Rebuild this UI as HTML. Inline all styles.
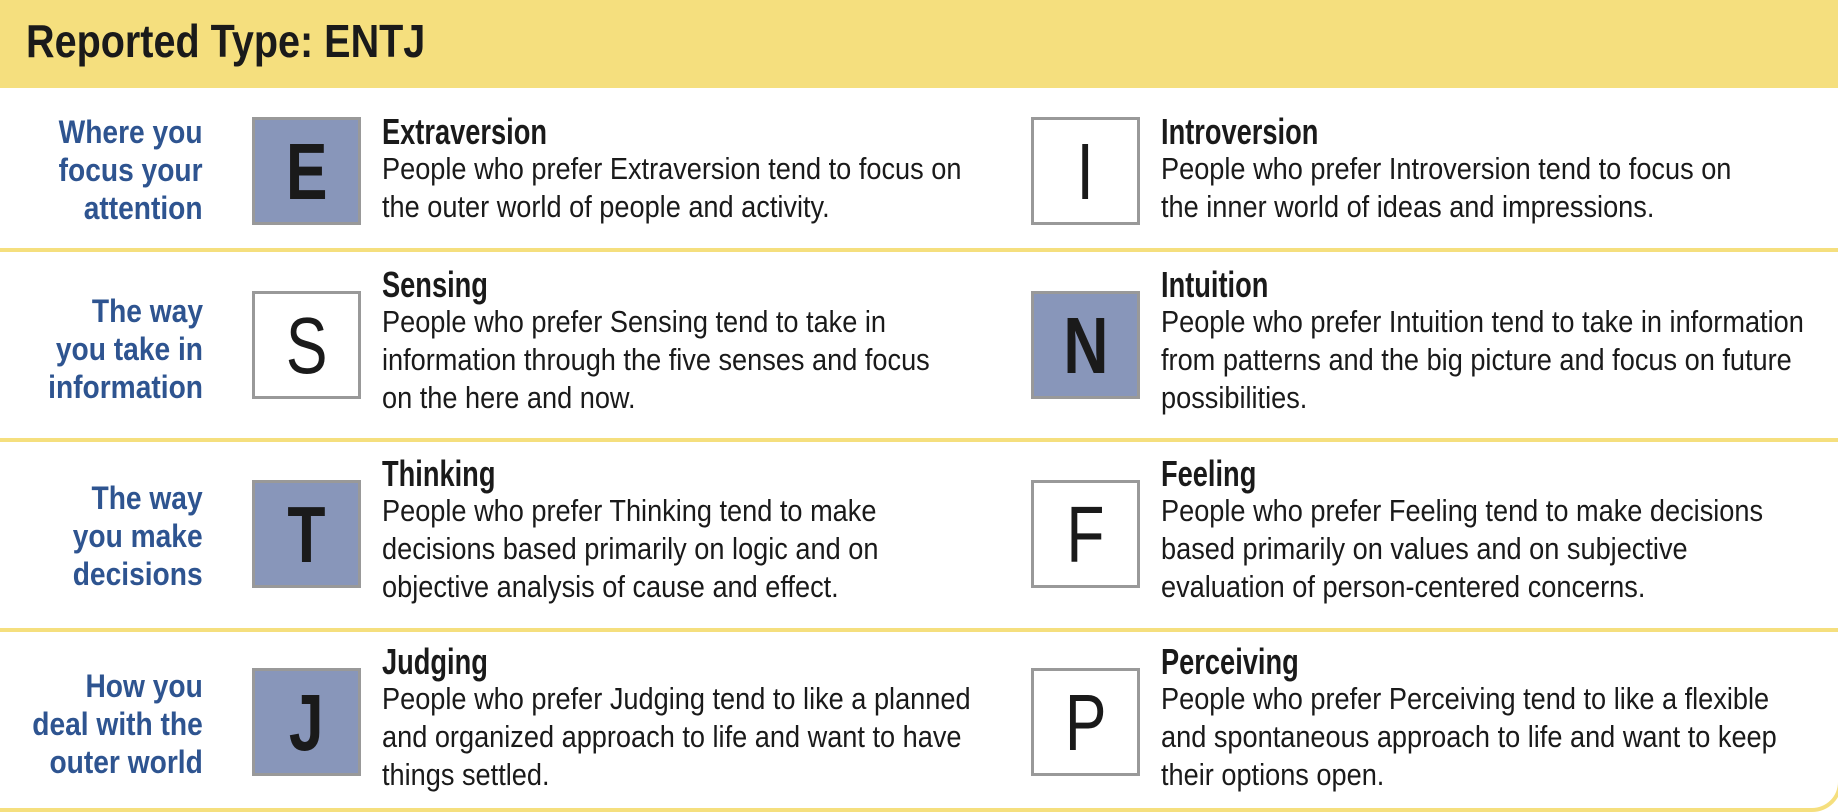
<!DOCTYPE html>
<html><head><style>
*{margin:0;padding:0;box-sizing:border-box}
body{width:1838px;height:808px;background:#fff;position:relative;overflow:hidden;font-family:"Liberation Sans",sans-serif;color:#1a1a1a}
.hdr{position:absolute;left:0;top:0;width:1838px;height:88px;background:#f5df7e}
.hdr h1{position:absolute;left:26px;top:14px;font-size:46px;font-weight:bold;transform:scaleX(0.86);transform-origin:left;white-space:nowrap}
.frame{position:absolute;left:-10px;top:88px;width:1852px;height:724px;border:4px solid #f5df7e;border-top:none;border-radius:0 0 30px 0}
.sep{position:absolute;left:0;width:1838px;height:4px;background:#f5df7e}
.lab{position:absolute;right:1635px;text-align:right;color:#2e5490;font-weight:bold;font-size:32px;line-height:38px;transform:scaleX(0.88);transform-origin:right;white-space:nowrap}
.box{position:absolute;width:109px;height:108px;border:3px solid #999;font-size:80px;line-height:104px;text-align:center;background:#fff}
.box span{display:inline-block;transform:scaleX(0.78)}
.on{background:#8896ba;font-weight:bold}
.t{position:absolute;font-size:30.5px;line-height:38px;white-space:nowrap;transform:scaleX(0.89);transform-origin:left}
.t b{display:block;font-size:36px;line-height:40px;margin-bottom:-2px;transform:scaleX(0.85);transform-origin:left}
</style></head><body>
<div class="hdr"><h1>Reported Type: ENTJ</h1></div>
<div class="frame"></div>
<div class="sep" style="top:248px"></div>
<div class="sep" style="top:438px"></div>
<div class="sep" style="top:628px"></div>

<div class="lab" style="top:113px">Where you<br>focus your<br>attention</div>
<div class="box on" style="left:252px;top:117px"><span>E</span></div>
<div class="t" style="left:382px;top:112px"><b>Extraversion</b>People who prefer Extraversion tend to focus on<br>the outer world of people and activity.</div>
<div class="box" style="left:1031px;top:117px"><span>I</span></div>
<div class="t" style="left:1161px;top:112px"><b>Introversion</b>People who prefer Introversion tend to focus on<br>the inner world of ideas and impressions.</div>

<div class="lab" style="top:292px">The way<br>you take in<br>information</div>
<div class="box" style="left:252px;top:291px"><span>S</span></div>
<div class="t" style="left:382px;top:265px"><b>Sensing</b>People who prefer Sensing tend to take in<br>information through the five senses and focus<br>on the here and now.</div>
<div class="box on" style="left:1031px;top:291px"><span>N</span></div>
<div class="t" style="left:1161px;top:265px"><b>Intuition</b>People who prefer Intuition tend to take in information<br>from patterns and the big picture and focus on future<br>possibilities.</div>

<div class="lab" style="top:479px">The way<br>you make<br>decisions</div>
<div class="box on" style="left:252px;top:480px"><span>T</span></div>
<div class="t" style="left:382px;top:454px"><b>Thinking</b>People who prefer Thinking tend to make<br>decisions based primarily on logic and on<br>objective analysis of cause and effect.</div>
<div class="box" style="left:1031px;top:480px"><span>F</span></div>
<div class="t" style="left:1161px;top:454px"><b>Feeling</b>People who prefer Feeling tend to make decisions<br>based primarily on values and on subjective<br>evaluation of person-centered concerns.</div>

<div class="lab" style="top:667px">How you<br>deal with the<br>outer world</div>
<div class="box on" style="left:252px;top:668px"><span>J</span></div>
<div class="t" style="left:382px;top:642px"><b>Judging</b>People who prefer Judging tend to like a planned<br>and organized approach to life and want to have<br>things settled.</div>
<div class="box" style="left:1031px;top:668px"><span>P</span></div>
<div class="t" style="left:1161px;top:642px"><b>Perceiving</b>People who prefer Perceiving tend to like a flexible<br>and spontaneous approach to life and want to keep<br>their options open.</div>
</body></html>
